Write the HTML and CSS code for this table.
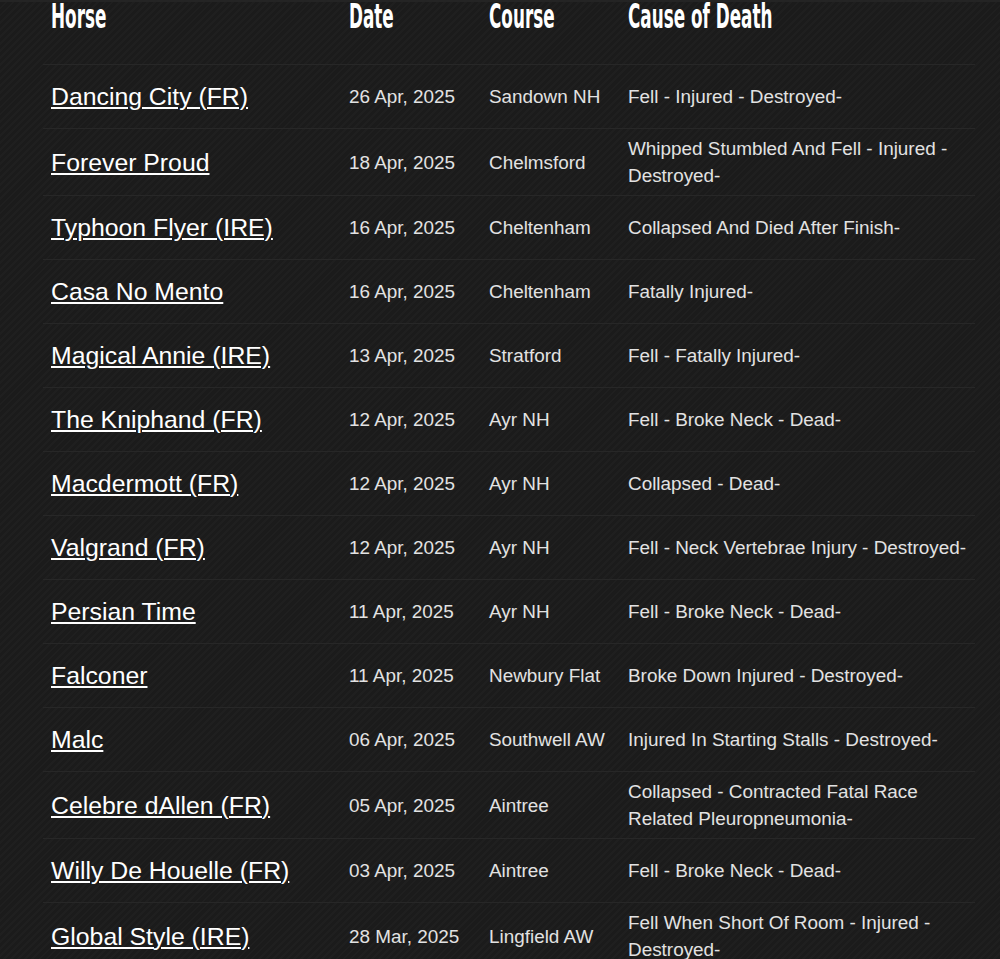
FILE: index.html
```html
<!DOCTYPE html>
<html lang="en">
<head>
<meta charset="utf-8">
<title>Horse deaths</title>
<link rel="stylesheet" href="styles.css">
</head>
<body>
<div class="page">
<table class="deaths">
<thead>
<tr>
<th><span class="hd">Horse</span></th>
<th><span class="hd">Date</span></th>
<th><span class="hd">Course</span></th>
<th><span class="hd">Cause of Death</span></th>
</tr>
</thead>
<tbody>
<tr><td class="name"><a href="#">Dancing City (FR)</a></td><td>26 Apr, 2025</td><td>Sandown NH</td><td>Fell - Injured - Destroyed-</td></tr>
<tr><td class="name"><a href="#">Forever Proud</a></td><td>18 Apr, 2025</td><td>Chelmsford</td><td>Whipped Stumbled And Fell - Injured - Destroyed-</td></tr>
<tr><td class="name"><a href="#">Typhoon Flyer (IRE)</a></td><td>16 Apr, 2025</td><td>Cheltenham</td><td>Collapsed And Died After Finish-</td></tr>
<tr><td class="name"><a href="#">Casa No Mento</a></td><td>16 Apr, 2025</td><td>Cheltenham</td><td>Fatally Injured-</td></tr>
<tr><td class="name"><a href="#">Magical Annie (IRE)</a></td><td>13 Apr, 2025</td><td>Stratford</td><td>Fell - Fatally Injured-</td></tr>
<tr><td class="name"><a href="#">The Kniphand (FR)</a></td><td>12 Apr, 2025</td><td>Ayr NH</td><td>Fell - Broke Neck - Dead-</td></tr>
<tr><td class="name"><a href="#">Macdermott (FR)</a></td><td>12 Apr, 2025</td><td>Ayr NH</td><td>Collapsed - Dead-</td></tr>
<tr><td class="name"><a href="#">Valgrand (FR)</a></td><td>12 Apr, 2025</td><td>Ayr NH</td><td>Fell - Neck Vertebrae Injury - Destroyed-</td></tr>
<tr><td class="name"><a href="#">Persian Time</a></td><td>11 Apr, 2025</td><td>Ayr NH</td><td>Fell - Broke Neck - Dead-</td></tr>
<tr><td class="name"><a href="#">Falconer</a></td><td>11 Apr, 2025</td><td>Newbury Flat</td><td>Broke Down Injured - Destroyed-</td></tr>
<tr><td class="name"><a href="#">Malc</a></td><td>06 Apr, 2025</td><td>Southwell AW</td><td>Injured In Starting Stalls - Destroyed-</td></tr>
<tr><td class="name"><a href="#">Celebre dAllen (FR)</a></td><td>05 Apr, 2025</td><td>Aintree</td><td>Collapsed - Contracted Fatal Race Related Pleuropneumonia-</td></tr>
<tr><td class="name"><a href="#">Willy De Houelle (FR)</a></td><td>03 Apr, 2025</td><td>Aintree</td><td>Fell - Broke Neck - Dead-</td></tr>
<tr><td class="name"><a href="#">Global Style (IRE)</a></td><td>28 Mar, 2025</td><td>Lingfield AW</td><td>Fell When Short Of Room - Injured - Destroyed-</td></tr>
</tbody>
</table>
</div>
</body>
</html>
```
FILE: styles.css
```css
html, body {
  margin: 0;
  padding: 0;
}
body {
  background-color: #1b1b1b;
  background-image: repeating-linear-gradient(135deg, rgba(255,255,255,0.018) 0 2px, rgba(0,0,0,0) 2px 5px);
  color: #e2e2e2;
  font-family: "Liberation Sans", Arial, sans-serif;
  overflow: hidden;
}
.page {
  padding-left: 43px;
  border-top: 2px solid #242424;
}
.deaths {
  width: 932px;
  border-collapse: collapse;
  table-layout: fixed;
}
.deaths th {
  text-align: left;
  vertical-align: top;
  height: 60px;
  padding: 2px 8px 0;
  color: #fff;
  font-family: "Liberation Sans Narrow", "DejaVu Sans Condensed", "Liberation Sans", sans-serif;
  font-weight: bold;
  font-size: 34px;
  line-height: 24px;
  white-space: nowrap;
}
.hd {
  display: inline-block;
  transform: scaleX(0.55);
  transform-origin: left top;
}
.deaths th:nth-child(1) { width: 282px; }
.deaths th:nth-child(2) { width: 124px; }
.deaths th:nth-child(3) { width: 123px; }
.deaths td {
  border-top: 1px solid #272727;
  padding: 6px 8px;
  height: 51px;
  vertical-align: middle;
  font-size: 18.9px;
  line-height: 27px;
  color: #e2e2e2;
}
.deaths td.name {
  font-size: 24.8px;
}
.deaths a {
  color: #fff;
  text-decoration: underline;
  text-underline-offset: 2px;
  text-decoration-thickness: 1.5px;
}
```
